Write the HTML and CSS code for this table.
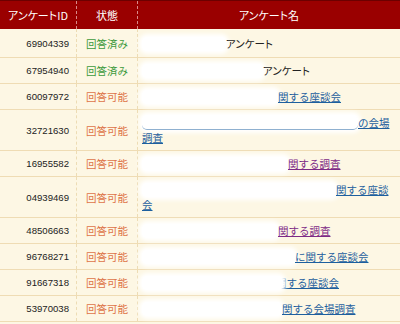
FILE: index.html
```html
<!DOCTYPE html>
<html lang="ja">
<head>
<meta charset="utf-8">
<link rel="stylesheet" href="styles.css">
</head>
<body>
<table class="list">
  <thead>
    <tr>
      <th class="c-id">アンケートID</th>
      <th class="c-st">状態</th>
      <th class="c-name">アンケート名</th>
    </tr>
  </thead>
  <tbody>
    <tr>
      <td class="c-id">69904339</td>
      <td class="c-st done">回答済み</td>
      <td class="c-name"><span class="blob" style="width:84px"></span><span class="plain">アンケート</span></td>
    </tr>
    <tr>
      <td class="c-id">67954940</td>
      <td class="c-st done">回答済み</td>
      <td class="c-name"><span class="blob" style="width:121px"></span><span class="plain">アンケート</span></td>
    </tr>
    <tr>
      <td class="c-id">60097972</td>
      <td class="c-st open">回答可能</td>
      <td class="c-name"><span class="blob" style="width:136px"></span><a class="lnk" href="#">関する座談会</a></td>
    </tr>
    <tr>
      <td class="c-id">32721630</td>
      <td class="c-st open">回答可能</td>
      <td class="c-name"><span class="blob uline" style="width:216px"></span><a class="lnk" href="#">の会場調査</a></td>
    </tr>
    <tr>
      <td class="c-id">16955582</td>
      <td class="c-st open">回答可能</td>
      <td class="c-name"><span class="blob" style="width:146px"></span><a class="lnk seen" href="#">関する調査</a></td>
    </tr>
    <tr>
      <td class="c-id">04939469</td>
      <td class="c-st open">回答可能</td>
      <td class="c-name"><span class="blob" style="width:194px"></span><a class="lnk" href="#">関する座談会</a></td>
    </tr>
    <tr>
      <td class="c-id">48506663</td>
      <td class="c-st open">回答可能</td>
      <td class="c-name"><span class="blob" style="width:136px"></span><a class="lnk seen" href="#">関する調査</a></td>
    </tr>
    <tr>
      <td class="c-id">96768271</td>
      <td class="c-st open">回答可能</td>
      <td class="c-name"><span class="blob" style="width:153px"></span><a class="lnk" href="#">に関する座談会</a></td>
    </tr>
    <tr>
      <td class="c-id">91667318</td>
      <td class="c-st open">回答可能</td>
      <td class="c-name"><span class="blob over" style="width:141px"></span><a class="lnk" href="#">関する座談会</a></td>
    </tr>
    <tr>
      <td class="c-id">53970038</td>
      <td class="c-st open">回答可能</td>
      <td class="c-name"><span class="blob" style="width:140px"></span><a class="lnk" href="#">関する会場調査</a></td>
    </tr>
  </tbody>
</table>
</body>
</html>
```
FILE: styles.css
```css
html, body {
  margin: 0;
  padding: 0;
  background: #fdf7e4;
}
.list {
  width: 400px;
  border-collapse: collapse;
  table-layout: fixed;
  font-family: "Noto Sans CJK JP", sans-serif;
  font-size: 10.5px;
  line-height: 15px;
  color: #222;
}
.list th {
  height: 28px;
  padding: 0;
  background: #9a0000;
  border-top: 1px solid #6c0000;
  color: #fff;
  font-weight: normal;
  font-size: 11px;
  font-feature-settings: "palt";
  text-align: center;
  vertical-align: middle;
}
.list th.c-id {
  width: 76px;
  border-right: 1px dashed #d88a8a;
}
.list th.c-st {
  width: 60px;
  border-right: 1px dashed #d88a8a;
}
.list td {
  padding: 5px 5px 5px 4px;
  background: #fdf7e4;
  border-bottom: 1px solid #efdcb4;
  vertical-align: middle;
}
.list tbody tr:first-child td {
  padding-top: 6.5px;
  padding-bottom: 6.5px;
}
.list td.c-id {
  text-align: right;
  padding-right: 7px;
  font-family: "Liberation Sans", sans-serif;
  font-size: 9.6px;
  color: #222;
  border-right: 1px dashed #eddcb4;
}
.list td.c-st {
  text-align: center;
  padding-left: 0;
  padding-right: 0;
  border-right: 1px dashed #eddcb4;
}
.done { color: #3c9a3c; }
.open { color: #de7448; }
.list td.c-name {
  text-align: left;
  padding-left: 4px;
  padding-right: 5px;
}
.blob {
  display: inline-block;
  height: 14px;
  vertical-align: -3px;
  background: #fff;
  border-radius: 5px;
  box-shadow: 0 0 4px 3px #fff;
}
.blob.uline {
  border-bottom: 1px solid #8fb0d0;
}
.blob.over {
  position: relative;
  z-index: 1;
  margin-right: -7px;
}
.plain {
  color: #222;
  font-feature-settings: "palt";
}
.lnk {
  color: #1d5f9e;
  text-decoration: underline;
}
.lnk.seen {
  color: #7d2a86;
}
```
